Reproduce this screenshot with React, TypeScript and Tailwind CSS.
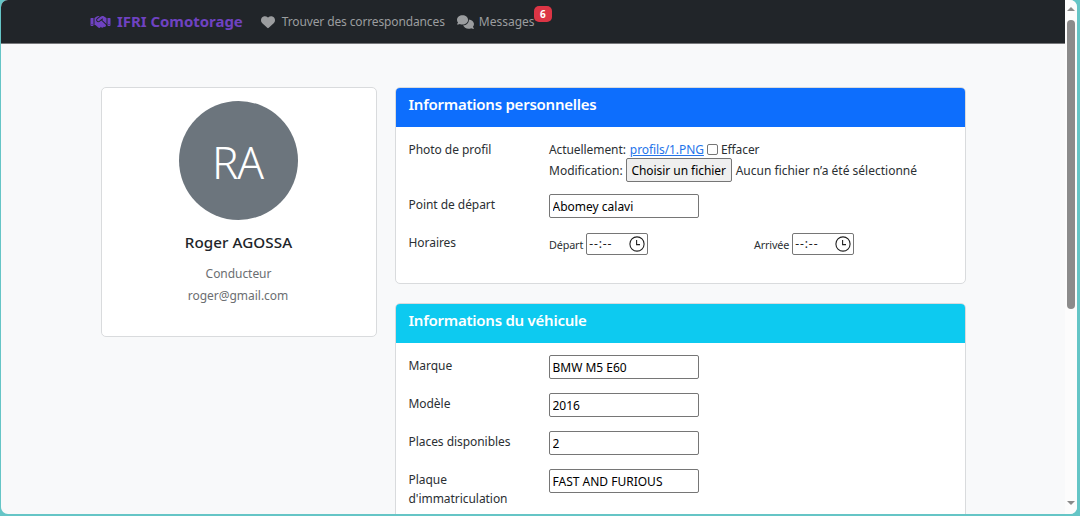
import type { ReactNode } from 'react';
import { FaComments, FaHandshake, FaHeart } from 'react-icons/fa6';

function NavBar() {
  return (
    <nav className="flex h-[44px] shrink-0 items-start border-b border-[#77787b] bg-[#212529] pl-[89px] text-[#9b9d9f]">
      <a className="flex h-[43px] items-center text-[#6f42c1]">
        <FaHandshake className="h-4 w-[21px]" />
        <span className="ml-[6px] text-[15px] font-bold tracking-[-0.04px]">IFRI Comotorage</span>
      </a>
      <a className="ml-[18px] flex h-[43px] items-center">
        <FaHeart className="h-[14px] w-[14px]" />
        <span className="ml-[7px] text-[12px] tracking-[-0.13px]">Trouver des correspondances</span>
      </a>
      <a className="relative ml-[12px] flex h-[43px] items-center">
        <FaComments className="h-[14px] w-[17px]" />
        <span className="ml-[5px] text-[12px] tracking-[0px]">Messages</span>
        <span className="absolute top-[6px] left-[77px] flex h-4 w-[18px] items-center justify-center rounded-[5px] bg-[#dc3545] text-[10px] font-bold text-white">
          6
        </span>
      </a>
    </nav>
  );
}

function ProfileCard() {
  return (
    <section className="flex h-[250px] w-[276px] flex-col items-center rounded-[5px] border border-[#d9dbdd] bg-white pt-[13px]">
      <div className="mr-px flex h-[119px] w-[119px] items-center justify-center rounded-full bg-[#6c757d] pt-[3px] pr-[2px] text-[44px] font-light tracking-[-1.1px] text-white">
        RA
      </div>
      <h5 className="mt-[13px] mr-px text-[15.2px] leading-[19px] font-[550] tracking-[0.06px]">Roger AGOSSA</h5>
      <p className="mt-[12px] mr-px text-[12px] leading-[19px] tracking-[-0.05px] text-[#6b6e71]">Conducteur</p>
      <p className="mt-[3px] mr-[2px] text-[12px] leading-[19px] tracking-[-0.02px] text-[#6b6e71]">roger@gmail.com</p>
    </section>
  );
}

function Card({ title, tone, className, children }: { title: string; tone: string; className: string; children: ReactNode }) {
  return (
    <section className={`overflow-hidden rounded-[5px] border border-[#d9dbdd] bg-white ${className}`}>
      <h5 className={`h-[39px] pt-[7px] pl-[12.5px] text-[15px] leading-[19px] font-semibold tracking-[-0.24px] text-white ${tone}`}>{title}</h5>
      <div className="px-[12.5px] pt-[13px]">{children}</div>
    </section>
  );
}

function Row({ label, className, children }: { label: string; className: string; children: ReactNode }) {
  return (
    <div className={`flex items-start ${className}`}>
      <div className="w-[140.5px] shrink-0 pr-4 text-[12px] leading-[19px] tracking-[-0.05px] text-[#2b2f33]">{label}</div>
      <div className="grow text-[#2b2f33]">{children}</div>
    </div>
  );
}

function TextField({ value }: { value: string }) {
  return (
    <input
      defaultValue={value}
      className="-mt-px block h-6 w-[150px] rounded-[2px] border border-[#767676] bg-white px-[2.5px] text-[12px] text-black outline-none"
    />
  );
}

function TimeField({ label }: { label: string }) {
  return (
    <label className="flex w-[205px] items-start">
      <span className="pt-[3px] text-[10.8px] leading-[17px] tracking-[-0.15px]">{label}</span>
      <span className="ml-[3px] flex h-[22px] w-[62px] items-center justify-between rounded-[2px] border border-[#767676] bg-white pr-[2px] pl-[2px] text-[12px] text-[#222]">
        <span className="tracking-[0.9px]">--:--</span>
        <svg viewBox="0 0 16 16" className="h-4 w-4" fill="none" stroke="#222" strokeWidth="1.1">
          <circle cx="8" cy="8" r="7.1" />
          <path d="M7.6 4v4.6H11" />
        </svg>
      </span>
    </label>
  );
}

function ScrollBar() {
  return (
    <div className="flex w-[12px] shrink-0 flex-col items-center bg-[#fcfcfc] pt-[7px] pb-[9px]">
      <svg viewBox="0 0 8 4" className="h-1 w-2 shrink-0">
        <path d="M0 4 4 0l4 4z" fill="#8a8a8a" />
      </svg>
      <div className="mt-[9px] h-[289px] w-2 rounded-full bg-[#8b8b8b]" />
      <svg viewBox="0 0 8 4" className="mt-auto h-1 w-2 shrink-0">
        <path d="M0 0h8L4 4z" fill="#8a8a8a" />
      </svg>
    </div>
  );
}

export default function App() {
  return (
    <div className="h-[516px] w-[1080px] bg-[#65c5c6] pr-[3px] pb-[2px] pl-px font-['Noto_Sans',sans-serif] text-[#212529]">
      <div className="flex h-[514px] overflow-hidden rounded-[7px] bg-[#f8f9fa]">
        <main className="flex w-[1064px] flex-col overflow-hidden">
          <NavBar />
          <div className="flex items-start gap-[18px] pt-[43px] pl-[100px]">
            <ProfileCard />
            <div className="flex w-[571px] flex-col gap-[19px]">
              <Card title="Informations personnelles" tone="bg-[#0d6efd]" className="h-[197px]">
                <Row label="Photo de profil" className="h-[55px]">
                  <div className="flex h-[18px] items-center text-[12px] leading-[19px] tracking-[-0.08px]">
                    <span>Actuellement:</span>
                    <a className="ml-[4px] text-[#2474ea] underline">profils/1.PNG</a>
                    <span className="ml-[3px] h-[11px] w-[11px] rounded-[2px] border border-[#767676] bg-white" />
                    <span className="ml-[3px]">Effacer</span>
                  </div>
                  <div className="flex h-6 items-center text-[12px] leading-[19px]">
                    <span>Modification:</span>
                    <button className="ml-[3px] h-6 w-[106px] rounded-[2px] border border-[#767676] bg-[#efefef] tracking-[-0.05px] text-black">
                      Choisir un fichier
                    </button>
                    <span className="ml-[4px]">Aucun fichier n’a été sélectionné</span>
                  </div>
                </Row>
                <Row label="Point de départ" className="h-[38px]">
                  <TextField value="Abomey calavi" />
                </Row>
                <Row label="Horaires" className="h-[38px]">
                  <div className="flex">
                    <TimeField label="Départ" />
                    <TimeField label="Arrivée" />
                  </div>
                </Row>
              </Card>
              <Card title="Informations du véhicule" tone="bg-[#0dcaf0]" className="h-[300px]">
                <Row label="Marque" className="h-[38px]">
                  <TextField value="BMW M5 E60" />
                </Row>
                <Row label="Modèle" className="h-[38px]">
                  <TextField value="2016" />
                </Row>
                <Row label="Places disponibles" className="h-[38px]">
                  <TextField value="2" />
                </Row>
                <Row label="Plaque d'immatriculation" className="h-[57px]">
                  <TextField value="FAST AND FURIOUS" />
                </Row>
              </Card>
            </div>
          </div>
        </main>
        <ScrollBar />
      </div>
    </div>
  );
}
